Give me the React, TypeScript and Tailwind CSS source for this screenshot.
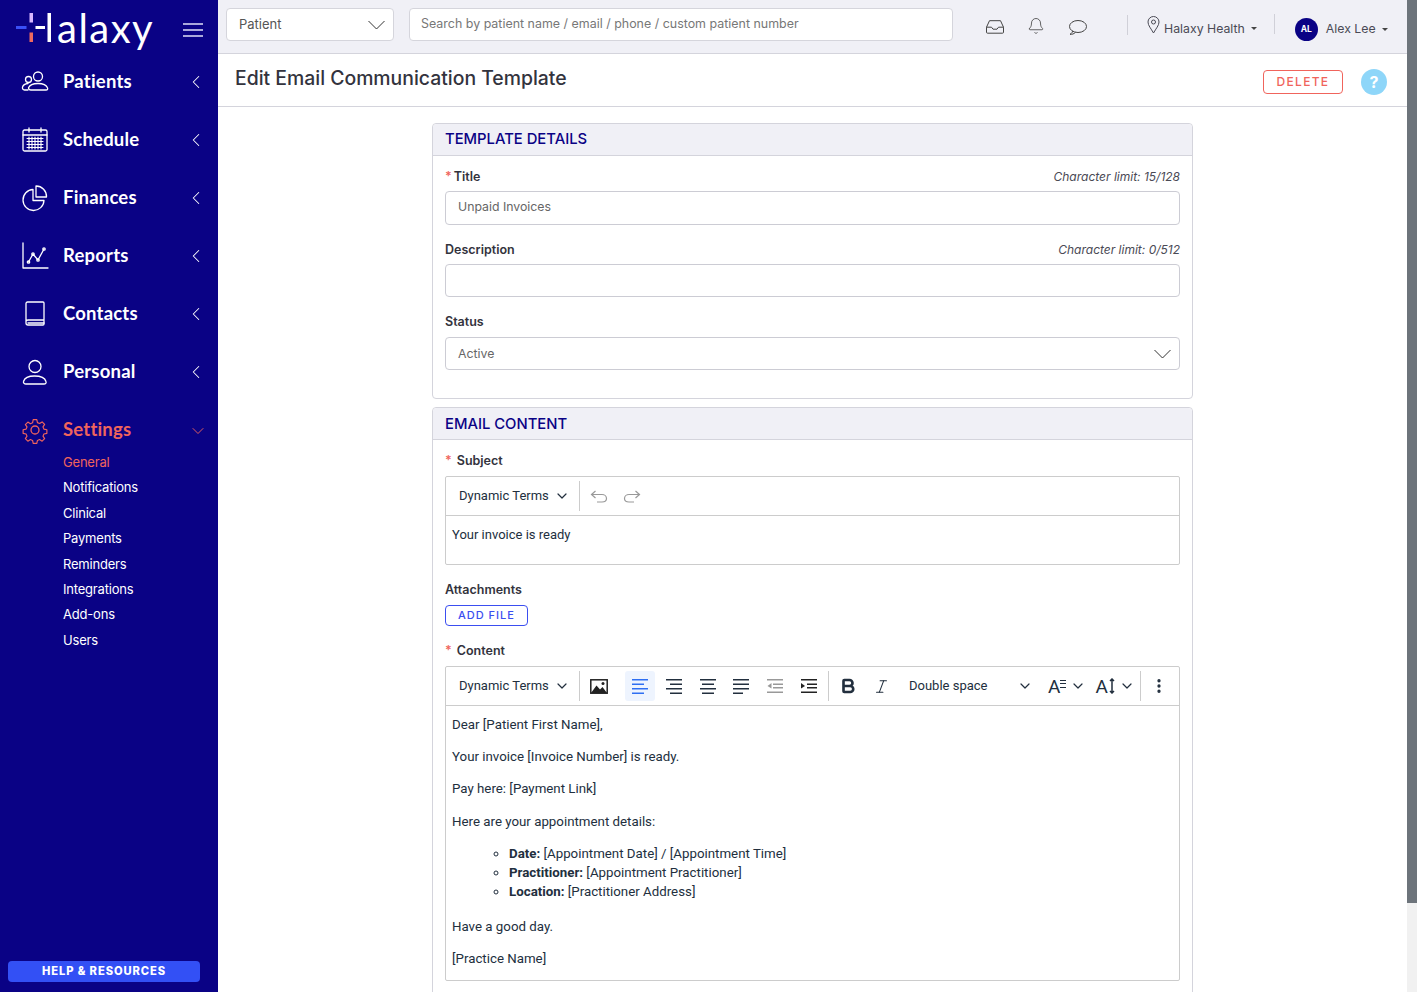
import React from "react";
import { ChevronLeft, ChevronDown, Bell, Bold, Italic, MoreVertical } from "lucide-react";

const rowSans = "font-['Inter',sans-serif]";

function Svg({ children, size = 28 }: { children: React.ReactNode; size?: number }) {
  return (
    <svg width={size} height={size} viewBox="0 0 28 28" fill="none" stroke="currentColor" strokeWidth="1.3" strokeLinecap="round" strokeLinejoin="round">
      {children}
    </svg>
  );
}

function ThinChevron({ className = "" }: { className?: string }) {
  return (
    <svg width="17" height="10" viewBox="0 0 17 10" fill="none" stroke="currentColor" strokeWidth="1" className={className}>
      <path d="M.5 1l8 8 8-8" />
    </svg>
  );
}

const icons: Record<string, React.ReactNode> = {
  Patients: (
    <Svg>
      <circle cx="17" cy="8.500" r="4.500" />
      <circle cx="7.500" cy="11.500" r="3" />
      <path d="M10 22h15c1.500 0 2-1 1.500-2.200-1-2.600-4.500-4.300-9.500-4.300s-8.500 1.700-9.500 4.300C7.500 21 8.500 22 10 22z" />
      <path d="M7 15.500c-3 .2-5 1.700-5.500 3.700-.3 1.400.5 2.800 2 2.800H7" />
    </Svg>
  ),
  Schedule: (
    <Svg>
      <rect x="2" y="4" width="24" height="21" rx="1.500" />
      <path d="M2 9h24M8 2v4M20 2v4" />
      <path d="M6 12.500h16M6 15.500h16M6 18.500h16M6 21.500h16M8 11v12M11 11v12M14 11v12M17 11v12M20 11v12" strokeWidth="1.100" />
    </Svg>
  ),
  Finances: (
    <Svg>
      <path d="M12 5.500a10.500 10.500 0 1 0 11 11H12z" />
      <path d="M15 2a10.500 10.500 0 0 1 10.500 11H15z" />
    </Svg>
  ),
  Reports: (
    <Svg>
      <path d="M2 1v25h25" />
      <circle cx="7.500" cy="20" r="1.200" />
      <circle cx="12" cy="12" r="1.200" />
      <circle cx="17" cy="18" r="1.200" />
      <circle cx="23" cy="7" r="1.200" />
      <path d="M7.500 20 12 12l5 6 6-11" />
    </Svg>
  ),
  Contacts: (
    <Svg>
      <path d="M5 21.500V3.500C5 2.700 5.700 2 6.500 2H22c.6 0 1 .4 1 1v21c0 .6-.4 1-1 1H7c-1.200 0-2-.8-2-2v-1.500c0-1 .8-1.500 2-1.500h16" />
      <path d="M7 23h16" />
    </Svg>
  ),
  Personal: (
    <Svg>
      <circle cx="14" cy="8.500" r="6" />
      <path d="M5 26h18c1.600 0 2.500-1 2-2.500-1-3.300-5.500-5.500-11.500-5.500S3.500 20.200 2.500 23.500C2 25 3.400 26 5 26z" />
    </Svg>
  ),
  Settings: (
    <Svg>
      <circle cx="14" cy="14" r="4" />
      <path d="M12 2.500h4l.7 3.300 2.400 1 2.800-1.800 2.800 2.800-1.800 2.800 1 2.400 3.300.7v4l-3.300.7-1 2.400 1.800 2.800-2.800 2.800-2.800-1.800-2.400 1-.7 3.300h-4l-.7-3.300-2.400-1-2.800 1.800-2.800-2.800 1.800-2.800-1-2.400-3.300-.7v-4l3.300-.7 1-2.400L3.300 8l2.800-2.800 2.800 1.800 2.400-1z" transform="translate(1.400 1.400) scale(.9)" />
    </Svg>
  ),
};

const nav = ["Patients", "Schedule", "Finances", "Reports", "Contacts", "Personal"];
const subs = ["Notifications", "Clinical", "Payments", "Reminders", "Integrations", "Add-ons", "Users"];

function Sidebar() {
  return (
    <aside className="w-[218px] shrink-0 h-full bg-[#0a0285] text-white flex flex-col relative font-['Lato',sans-serif]">
      <div className="h-[53px] flex items-center pl-[16px] pr-[15px] justify-between">
        <div className="flex items-center h-[53px]">
          <svg width="36" height="40" viewBox="0 0 36 40" className="mt-[12px]">
            <rect x="13.500" y="0" width="3.500" height="9.500" fill="#d9b8ff" />
            <rect x="0" y="13" width="10.500" height="3" fill="#3a50f6" />
            <rect x="13.500" y="19.500" width="3.500" height="9.500" fill="#ef6a60" />
            <rect x="19.500" y="13" width="9.500" height="3" fill="#fff" />
            <rect x="31.500" y="0" width="3.500" height="29" fill="#fff" />
          </svg>
          <span className="text-[40px] leading-none font-normal tracking-[1.500px] ml-[5px] mt-[2px]">alaxy</span>
        </div>
        <svg width="20" height="14" viewBox="0 0 20 14" stroke="#dfe0f7" strokeWidth="1.500" className="mt-[7px]">
          <path d="M0 1h20M0 7h20M0 13h20" />
        </svg>
      </div>
      <nav className="flex flex-col">
        {nav.map((n) => (
          <div key={n} className="h-[58px] flex items-center pl-[21px] pr-[11px]">
            <span className="w-[42px] flex">{icons[n]}</span>
            <span className="text-[18.500px] font-bold flex-1 tracking-[0.2px]">{n}</span>
            <ChevronLeft size={22} strokeWidth={1.100} />
          </div>
        ))}
        <div className="h-[58px] flex items-center pl-[21px] pr-[10px] text-[#f0645c]">
          <span className="w-[42px] flex">{icons.Settings}</span>
          <span className="text-[18.500px] font-bold flex-1 tracking-[0.2px]">Settings</span>
          <ChevronDown size={20} strokeWidth={1.100} className="mt-[2px]" />
        </div>
      </nav>
      <div className="pl-[63px] flex flex-col text-[13px] font-['Inter',sans-serif] tracking-[-0.2px]">
        <div className="h-[25.400px] flex items-center text-[#f0645c] -mt-[9px]">General</div>
        {subs.map((s) => (
          <div key={s} className="h-[25.400px] flex items-center">{s}</div>
        ))}
      </div>
      <div className="mt-auto mb-[10px] ml-[8px] mr-[18px] h-[21px] rounded-[4px] bg-[#3350f5] flex items-center justify-center text-[11.200px] font-extrabold tracking-[0.9px] font-['Inter',sans-serif]">
        HELP &amp; RESOURCES
      </div>
    </aside>
  );
}

function Header() {
  return (
    <header className="h-[54px] shrink-0 bg-[#f0f0f6] border-b border-[#d4d4dc] flex items-start text-[#4a4a55] text-[12.300px]">
      <div className="ml-[8px] mt-[8px] w-[168px] h-[33px] bg-white border border-[#d5d5dc] rounded-[4px] flex items-center justify-between px-[12px] text-[13px] text-[#555]">
        Patient
        <ThinChevron className="-mr-[4px] text-[#333]" />
      </div>
      <div className="ml-[15px] mt-[8px] w-[544px] h-[33px] bg-white border border-[#d5d5dc] rounded-[4px] flex items-center px-[11px] text-[12.440px] text-[#777]">
        Search by patient name / email / phone / custom patient number
      </div>
      <div className="ml-[33px] mt-[19px] flex items-center text-[#444]">
        <svg width="18" height="14" viewBox="0 0 18 14" fill="none" stroke="currentColor" strokeWidth="1">
          <path d="M3.500.7h11l3 6.500v5a1 1 0 0 1-1 1H1.500a1 1 0 0 1-1-1v-5z" />
          <path d="M.5 7.200h5l1.500 2h4l1.500-2h5" />
        </svg>
        <Bell size={18} strokeWidth={1.100} className="ml-[23px] -mt-[2px]" />
        <svg width="19" height="15" viewBox="0 0 19 15" fill="none" stroke="currentColor" strokeWidth="1" className="ml-[23px]">
          <ellipse cx="10" cy="6.500" rx="8.500" ry="6" />
          <path d="M4.500 11c0 1.200-.7 2.400-2.500 3.300 2 .2 4-.3 5.500-2" />
        </svg>
      </div>
      <div className="ml-[40px] mt-[15px] w-px h-[20px] bg-[#d0d0d8]" />
      <div className="ml-[19px] mt-[16px] flex items-start">
        <svg width="13" height="18" viewBox="0 0 13 18" fill="none" stroke="currentColor" strokeWidth="1">
          <path d="M6.500 17C4 12.500 1 9.500 1 6a5.500 5.500 0 0 1 11 0c0 3.500-3 6.500-5.500 11z" />
          <circle cx="6.500" cy="6" r="2" />
        </svg>
        <span className="ml-[4px] mt-[4px] leading-[18px]">Halaxy Health</span>
        <span className="ml-[6px] mt-[11px] border-x-[3px] border-t-[3px] border-x-transparent border-t-[#444]" />
      </div>
      <div className="ml-[17px] mt-[14px] w-px h-[20px] bg-[#d0d0d8]" />
      <div className="ml-[20px] mt-[18px] flex items-center">
        <span className="w-[23px] h-[23px] rounded-full bg-[#0a0285] text-white text-[8.500px] font-bold flex items-center justify-center">AL</span>
        <span className="ml-[8px]">Alex Lee</span>
        <span className="ml-[6px] border-x-[3px] border-t-[3px] border-x-transparent border-t-[#444]" />
      </div>
    </header>
  );
}

function Label({ req, children, right, tight }: { req?: boolean; children: React.ReactNode; right?: string; tight?: boolean }) {
  return (
    <div className="flex justify-between items-center h-[18px] text-[12.500px] text-[#33333d]">
      <span className="font-semibold">
        {req && <span className={`text-[#f0645c] ${tight ? "mr-[2px]" : "mr-[5px]"}`}>*</span>}
        {children}
      </span>
      {right && <span className="italic text-[#4a4a55] text-[12px]">{right}</span>}
    </div>
  );
}

function Input({ children, className = "" }: { children?: React.ReactNode; className?: string }) {
  return (
    <div className={`border border-[#ccccd4] rounded-[4px] flex items-center justify-between px-[12px] text-[12.300px] text-[#666] ${className}`}>
      {children}
    </div>
  );
}

function CardHead({ children, className = "" }: { children: React.ReactNode; className?: string }) {
  return (
    <div className={`h-[32px] bg-[#f0f0f6] border-b border-[#d4d4dc] rounded-t-[4px] flex items-center px-[12px] text-[14.800px] font-medium text-[#0a0285] ${className}`}>
      {children}
    </div>
  );
}

function AlignIcon({ lines, className = "" }: { lines: [number, number][]; className?: string }) {
  return (
    <svg width="18" height="16" viewBox="0 0 18 16" className={className}>
      {lines.map(([x, w], i) => (
        <rect key={i} x={x} y={1 + i * 4.500} width={w} height="1.500" fill="currentColor" />
      ))}
    </svg>
  );
}

function DynamicTerms() {
  return (
    <div className="w-[134px] h-[30px] flex items-center pl-[13px] border-r border-[#ccc] font-['Roboto',sans-serif] text-[13px] text-[#222f3e]">
      Dynamic Terms
      <ChevronDown size={16} strokeWidth={1.800} className="ml-[5px]" />
    </div>
  );
}

function UndoIcon({ className = "" }: { className?: string }) {
  return (
    <svg width="18" height="13" viewBox="0 0 18 13" fill="none" stroke="#999" strokeWidth="1.200" className={className}>
      <path d="M5.500 1 1.500 4.500l4 3.500M1.500 4.500H12c2.500 0 4.500 1.800 4.500 4s-2 3.500-4.500 3.500H7" />
    </svg>
  );
}

function ContentToolbar() {
  return (
    <div className="h-[39px] border-b border-[#ccc] flex items-center font-['Roboto',sans-serif] text-[#222f3e]">
      <DynamicTerms />
      <svg width="18" height="15" viewBox="0 0 18 15" className="ml-[10px]">
        <rect x="0.800" y="0.800" width="16.400" height="13.400" fill="none" stroke="#222" strokeWidth="1.500" />
        <path d="M1 14 6.500 6.500l3.500 4 2.500-2.500 4.500 6z" fill="#222" />
        <circle cx="13" cy="4.500" r="1.500" fill="#222" />
      </svg>
      <div className="ml-[17px] w-[30px] h-[30px] rounded-[3px] bg-[#eef4fe] flex items-center justify-center text-[#2e6ff2]">
        <AlignIcon lines={[[1, 16], [1, 12], [1, 16], [1, 12]]} />
      </div>
      <AlignIcon lines={[[1, 16], [5, 12], [1, 16], [5, 12]]} className="ml-[10px]" />
      <AlignIcon lines={[[1, 16], [3, 12], [1, 16], [3, 12]]} className="ml-[16px]" />
      <AlignIcon lines={[[1, 16], [1, 16], [1, 16], [1, 10]]} className="ml-[15px]" />
      <svg width="18" height="16" viewBox="0 0 18 16" className="ml-[16px] text-[#999]">
        <rect x="1" y="1" width="16" height="1.500" fill="currentColor" />
        <rect x="7" y="5.500" width="10" height="1.500" fill="currentColor" />
        <rect x="7" y="9" width="10" height="1.500" fill="currentColor" />
        <rect x="1" y="13.500" width="16" height="1.500" fill="currentColor" />
        <path d="M5.500 5v5.500L1.500 8z" fill="currentColor" />
      </svg>
      <svg width="18" height="16" viewBox="0 0 18 16" className="ml-[16px] text-[#222]">
        <rect x="1" y="1" width="16" height="1.500" fill="currentColor" />
        <rect x="7" y="5.500" width="10" height="1.500" fill="currentColor" />
        <rect x="7" y="9" width="10" height="1.500" fill="currentColor" />
        <rect x="1" y="13.500" width="16" height="1.500" fill="currentColor" />
        <path d="M1 5v5.500L5 8z" fill="currentColor" />
      </svg>
      <div className="ml-[10px] w-px h-[30px] bg-[#ccc]" />
      <Bold size={18} strokeWidth={3.500} className="ml-[10px]" />
      <Italic size={17} strokeWidth={1.500} className="ml-[16px]" />
      <span className="ml-[19px] text-[13px] w-[108px]">Double space</span>
      <ChevronDown size={16} strokeWidth={1.800} />
      <span className="ml-[15px] text-[19px] leading-none relative">
        A<span className="absolute -right-[6px] top-[3px] w-[6px] h-[8px] border-y border-[#222f3e]"><span className="block mt-[2px] h-px bg-[#222f3e]" /></span>
      </span>
      <ChevronDown size={16} strokeWidth={1.800} className="ml-[10px]" />
      <span className="ml-[9px] text-[19px] leading-none flex items-center">
        A<svg width="8" height="16" viewBox="0 0 8 16"><path d="M4 1v14M2 3l2-2 2 2M2 13l2 2 2-2" fill="none" stroke="#222f3e" strokeWidth="1.500" /></svg>
      </span>
      <ChevronDown size={16} strokeWidth={1.800} className="ml-[3px]" />
      <div className="ml-[5px] w-px h-[30px] bg-[#ccc]" />
      <MoreVertical size={18} strokeWidth={2.400} className="ml-[9px]" />
    </div>
  );
}

function Body() {
  return (
    <div className="flex-1 min-h-0 overflow-hidden pt-[16px]">
      <div className="w-[761px] ml-[214px] flex flex-col gap-[8px]">
        <section className="h-[276px] border border-[#d4d4dc] rounded-[4px]">
          <CardHead>TEMPLATE DETAILS</CardHead>
          <div className="px-[12px] pt-[12px]">
            <Label req tight right="Character limit: 15/128">Title</Label>
            <Input className="mt-[5px] h-[34px] pb-[2px]">Unpaid Invoices</Input>
            <div className="h-[16px]" />
            <Label right="Character limit: 0/512">Description</Label>
            <Input className="mt-[5px] h-[33px]" />
            <div className="h-[16px]" />
            <Label>Status</Label>
            <Input className="mt-[6px] h-[33px] pt-[1px]">
              Active
              <ThinChevron className="-mr-[4px] text-[#333]" />
            </Input>
          </div>
        </section>
        <section className="border border-[#d4d4dc] rounded-[4px] pb-[30px]">
          <CardHead className="pt-[2px]">EMAIL CONTENT</CardHead>
          <div className="px-[12px] pt-[12px]">
            <Label req>Subject</Label>
            <div className="mt-[6px] h-[89px] border border-[#ccc] rounded-[2px] font-['Roboto',sans-serif] text-[13px] text-[#222f3e]">
              <div className="h-[39px] border-b border-[#ccc] flex items-center">
                <DynamicTerms />
                <UndoIcon className="ml-[10px]" />
                <UndoIcon className="ml-[15px] -scale-x-100" />
              </div>
              <p className="px-[6px] pt-[9px]">Your invoice is ready</p>
            </div>
            <div className="h-[16px]" />
            <Label>Attachments</Label>
            <button className="block mt-[6px] w-[83px] h-[21px] border border-[#3b4ef0] rounded-[4px] text-[#3b4ef0] text-[11px] font-medium tracking-[1px]">ADD FILE</button>
            <div className="h-[16px]" />
            <Label req>Content</Label>
            <div className="mt-[6px] border border-[#ccc] rounded-[2px]">
              <ContentToolbar />
              <div className="px-[6px] pt-[9px] h-[274px] font-['Roboto',sans-serif] text-[13.300px] text-[#222f3e] leading-[19px]">
                <p>Dear [Patient First Name],</p>
                <p className="mt-[13px]">Your invoice [Invoice Number] is ready.</p>
                <p className="mt-[13px]">Pay here: [Payment Link]</p>
                <p className="mt-[13.500px]">Here are your appointment details:</p>
                <ul className="mt-[13px] pl-[57px] list-[circle]">
                  <li><b className="font-bold">Date:</b> [Appointment Date] / [Appointment Time]</li>
                  <li><b className="font-bold">Practitioner:</b> [Appointment Practitioner]</li>
                  <li><b className="font-bold">Location:</b> [Practitioner Address]</li>
                </ul>
                <p className="mt-[16px]">Have a good day.</p>
                <p className="mt-[13px]">[Practice Name]</p>
              </div>
            </div>
          </div>
        </section>
      </div>
    </div>
  );
}

export default function App() {
  return (
    <div className={`h-[992px] w-full overflow-hidden flex bg-white ${rowSans}`}>
      <Sidebar />
      <main className="flex-1 min-w-0 h-full flex flex-col">
        <Header />
        <div className="h-[53px] shrink-0 border-b border-[#d4d4dc] flex items-center pl-[17px] pr-[20px]">
          <h1 className="text-[19.400px] font-medium text-[#33333d] flex-1 -mt-[3px]">Edit Email Communication Template</h1>
          <button className="w-[80px] h-[24px] mt-[4px] border border-[#f0645c] rounded-[4px] text-[#f0645c] text-[12px] font-medium tracking-[1.300px] mr-[18px]">DELETE</button>
          <span className="w-[26px] h-[26px] mt-[4px] rounded-full bg-[#8ed6f9] text-white font-bold text-[16px] flex items-center justify-center">?</span>
        </div>
        <Body />
      </main>
      <div className="w-[10px] shrink-0 h-full flex flex-col bg-[#f1f1f1]">
        <div className="h-[903px] bg-[#6d747b]" />
      </div>
    </div>
  );
}
